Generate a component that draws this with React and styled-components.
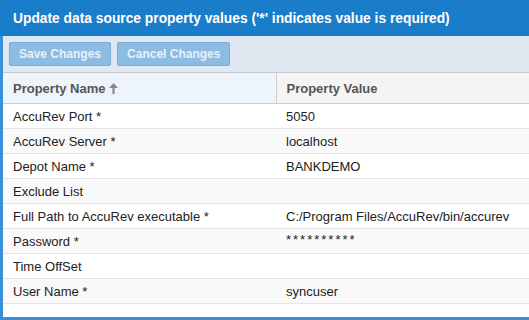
import styled, { createGlobalStyle } from 'styled-components';

const GlobalStyle = createGlobalStyle`
  html, body {
    margin: 0;
    padding: 0;
    background: #fff;
    overflow: hidden;
  }
  body {
    font-family: "Liberation Sans", Arial, sans-serif;
    font-size: 13px;
    color: #222;
  }
`;

const Panel = styled.section`
  width: 100%;
  height: 320px;
  box-sizing: border-box;
  display: flex;
  flex-direction: column;
  background: #fff;
  border-bottom: 3px solid #3990d8;
`;

const TitleBar = styled.header`
  height: 36px;
  flex: none;
  display: flex;
  align-items: center;
  padding-left: 13px;
  background: #1a7dc9;
  color: #fff;
  font-weight: 700;
  font-size: 13.8px;
`;

const Body = styled.div`
  flex: 1;
  display: flex;
  flex-direction: column;
  border-left: 3px solid #3990d8;
`;

const Toolbar = styled.div`
  height: 36px;
  flex: none;
  display: flex;
  align-items: center;
  gap: 6px;
  padding-left: 6px;
  background: #dfe8f1;
  border-bottom: 1px solid #c4c8cc;
`;

const Button = styled.button`
  height: 24px;
  padding: 0 9px;
  font-family: inherit;
  font-size: 12px;
  font-weight: 700;
  color: #e8f0f8;
  background: #8cbce2;
  border: 1px solid #77acd9;
  border-radius: 2px;
  cursor: default;
`;

const Grid = styled.table`
  width: 100%;
  border-collapse: collapse;
  table-layout: fixed;
`;

const HeadCell = styled.th`
  height: 30px;
  padding: 0 10px;
  text-align: left;
  font-weight: 700;
  color: #555;
  background: ${p => (p.$sorted ? '#edf4fb' : '#f4f4f4')};
  border-bottom: 1px solid #cdcdcd;
  border-right: ${p => (p.$sorted ? '1px solid #cdcdcd' : 'none')};
  white-space: nowrap;
`;

const SortArrow = styled.svg`
  margin-left: 4px;
  vertical-align: -1px;
`;

const Row = styled.tr`
  background: ${p => (p.$alt ? '#f9f9f9' : '#fff')};
`;

const Cell = styled.td`
  height: 24px;
  padding: 0 10px;
  border-bottom: 1px solid #e6e6e6;
  white-space: nowrap;
  overflow: hidden;
`;

const Masked = styled.span`
  letter-spacing: 2px;
  position: relative;
  top: -2px;
`;

const rows = [
  ['AccuRev Port *', '5050'],
  ['AccuRev Server *', 'localhost'],
  ['Depot Name *', 'BANKDEMO'],
  ['Exclude List', ''],
  ['Full Path to AccuRev executable *', 'C:/Program Files/AccuRev/bin/accurev'],
  ['Password *', '**********', true],
  ['Time OffSet', ''],
  ['User Name *', 'syncuser'],
];

export default function App() {
  return (
    <>
      <GlobalStyle />
      <Panel>
        <TitleBar>Update data source property values ('*' indicates value is required)</TitleBar>
        <Body>
          <Toolbar>
            <Button>Save Changes</Button>
            <Button>Cancel Changes</Button>
          </Toolbar>
          <Grid>
            <colgroup>
              <col style={{ width: 273 }} />
              <col />
            </colgroup>
            <thead>
              <tr>
                <HeadCell $sorted>
                  Property Name
                  <SortArrow width="9" height="11" viewBox="0 0 9 11">
                    <path d="M4.5 0 L9 5 H5.6 V11 H3.4 V5 H0 Z" fill="#8a8a8a" />
                  </SortArrow>
                </HeadCell>
                <HeadCell>Property Value</HeadCell>
              </tr>
            </thead>
            <tbody>
              {rows.map(([name, value, secret], i) => (
                <Row key={name} $alt={i % 2 === 1}>
                  <Cell>{name}</Cell>
                  <Cell>{secret ? <Masked>{value}</Masked> : value}</Cell>
                </Row>
              ))}
            </tbody>
          </Grid>
        </Body>
      </Panel>
    </>
  );
}
